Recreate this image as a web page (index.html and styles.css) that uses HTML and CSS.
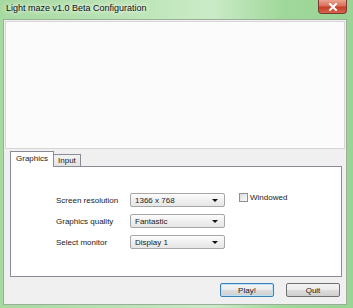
FILE: index.html
```html
<!DOCTYPE html>
<html>
<head>
    <title>Light maze v1.0 Beta Configuration</title>
    <link rel="stylesheet" href="styles.css">
</head>
<body>
    <div class="window">
        <div class="titlebar">
            <span class="title">Light maze v1.0 Beta Configuration</span>
            <div class="close">
                <svg width="10" height="8" viewBox="0 0 10 8">
                    <path d="M2 1 L8 7 M8 1 L2 7" stroke="#fff" stroke-width="2" stroke-linecap="square"/>
                </svg>
            </div>
        </div>

        <div class="client">
            <div class="banner"></div>

            <div class="tabs">
                <div class="tab-strip">
                    <span class="tab active">Graphics</span>
                    <span class="tab">Input</span>
                </div>
                <div class="tab-panel">
                    <div class="form">
                        <span class="label">Screen resolution</span>
                        <div class="combo"><span>1366 x 768</span><i class="arrow"></i></div>
                        <label class="check"><span class="box"></span>Windowed</label>

                        <span class="label">Graphics quality</span>
                        <div class="combo"><span>Fantastic</span><i class="arrow"></i></div>
                        <span></span>

                        <span class="label">Select monitor</span>
                        <div class="combo"><span>Display 1</span><i class="arrow"></i></div>
                        <span></span>
                    </div>
                </div>
            </div>

            <div class="actions">
                <button class="btn default">Play!</button>
                <button class="btn">Quit</button>
            </div>
        </div>
    </div>
</body>
</html>
```

FILE: styles.css
```css
/* page */
html, body {
    margin: 0;
    padding: 0;
}
body {
    font-family: "Liberation Sans", Arial, sans-serif;
    font-size: 8px;
    color: #1a1a1a;
}

/* window frame */
.window {
    width: 353px;
    height: 308px;
    display: flex;
    flex-direction: column;
    background: linear-gradient(90deg, #a6d9a0 0%, #bde5b8 40%, #cbebc8 60%, #a0d89b 80%, #98d494 100%);
    box-sizing: border-box;
}
.titlebar {
    height: 19px;
    display: flex;
    align-items: flex-start;
}
.title {
    padding: 3px 0 0 6px;
    font-size: 9px;
    color: #111;
    text-shadow: 0 0 4px #fff, 0 0 6px #fff;
}
.close {
    margin-left: auto;
    margin-right: 6px;
    width: 29px;
    height: 14px;
    box-sizing: border-box;
    border: 1px solid #7a3a2f;
    border-top: none;
    border-radius: 0 0 4px 4px;
    background: linear-gradient(#eaa592 0%, #d8705a 45%, #c53f28 55%, #d8654c 100%);
    display: flex;
    align-items: center;
    justify-content: center;
}

/* client area */
.client {
    flex: 1;
    margin: 0 6px 3px 3px;
    background: #f0f0f0;
    border: 1px solid #9aae9a;
    display: flex;
    flex-direction: column;
    padding: 1px 1px 0 1px;
}
.banner {
    height: 126px;
    background: #fbfbfb;
    border: 1px solid #d6d6d6;
}

/* tab control */
.tabs {
    margin: 2px 3px 0 5px;
}
.tab-strip {
    display: flex;
    align-items: flex-end;
    height: 15px;
    position: relative;
    z-index: 1;
}
.tab {
    height: 11px;
    padding: 0 4px;
    line-height: 11px;
    border: 1px solid #898c95;
    border-bottom: none;
    background: linear-gradient(#f3f3f3, #e3e3e3);
    margin-left: -1px;
}
.tab.active {
    height: 15px;
    line-height: 14px;
    margin-left: 0;
    padding: 0 5px;
    background: #fff;
    margin-bottom: -1px;
}
.tab-panel {
    height: 109px;
    background: #fff;
    border: 1px solid #898c95;
}
.form {
    display: grid;
    grid-template-columns: 62px 95px auto;
    grid-auto-rows: 14px;
    row-gap: 7px;
    column-gap: 12px;
    padding: 26px 0 0 45px;
    align-items: center;
}
.label {
    white-space: nowrap;
}
.combo {
    height: 14px;
    box-sizing: border-box;
    border: 1px solid #a7a7a7;
    border-radius: 2px;
    background: linear-gradient(#fcfcfc, #f0f0f0 50%, #e6e6e6);
    display: flex;
    align-items: center;
    padding: 0 6px 0 4px;
}
.arrow {
    margin-left: auto;
    width: 0;
    height: 0;
    border-left: 3px solid transparent;
    border-right: 3px solid transparent;
    border-top: 3px solid #111;
}
.check {
    display: flex;
    align-items: center;
    gap: 2px;
    margin: -5px 0 0 2px;
}
.box {
    width: 9px;
    height: 9px;
    box-sizing: border-box;
    border: 1px solid #8e8f8f;
    background: linear-gradient(135deg, #dcdcdc, #fbfbfb);
}

/* bottom buttons */
.actions {
    display: flex;
    justify-content: flex-end;
    gap: 12px;
    padding: 6px 5px 0 0;
}
.btn {
    width: 54px;
    height: 14px;
    padding: 0;
    font-family: inherit;
    font-size: 8px;
    color: #1a1a1a;
    border: 1px solid #707070;
    border-radius: 2px;
    background: linear-gradient(#f4f4f4, #ebebeb 50%, #dddddd 51%, #cfcfcf);
}
.btn.default {
    border-color: #3c7fb1;
    box-shadow: inset 0 0 0 1px #b9e4fb;
}
```
